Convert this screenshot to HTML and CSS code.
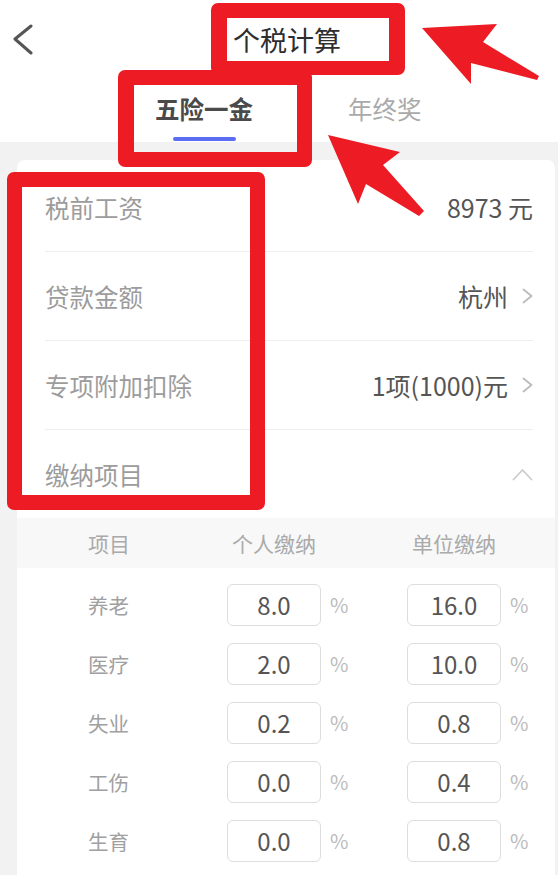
FILE: index.html
```html
<!DOCTYPE html>
<html lang="zh-CN">
<head>
<meta charset="utf-8">
<title>个税计算</title>
<link rel="stylesheet" href="styles.css">
</head>
<body>
<div class="page">
  <header class="nav">
    <svg class="back" width="22" height="32" viewBox="0 0 22 32"><polyline points="19,2 3,15 19,29" fill="none" stroke="#555" stroke-width="3" stroke-linecap="round" stroke-linejoin="round"/></svg>
    <h1 class="title">个税计算</h1>
  </header>
  <nav class="tabs">
    <div class="tab active"><span class="tab-text">五险一金</span><i class="bar"></i></div>
    <div class="tab"><span class="tab-text">年终奖</span></div>
  </nav>
  <main class="card">
    <div class="row"><span class="label">税前工资</span><span class="value">8973 元</span></div>
    <div class="row"><span class="label">贷款金额</span><span class="value">杭州<svg class="chev" width="11" height="16" viewBox="0 0 11 16"><polyline points="1.5,1.5 9.5,8 1.5,14.5" fill="none" stroke="#bbb" stroke-width="1.8" stroke-linecap="round" stroke-linejoin="round"/></svg></span></div>
    <div class="row"><span class="label">专项附加扣除</span><span class="value">1项(1000)元<svg class="chev" width="11" height="16" viewBox="0 0 11 16"><polyline points="1.5,1.5 9.5,8 1.5,14.5" fill="none" stroke="#bbb" stroke-width="1.8" stroke-linecap="round" stroke-linejoin="round"/></svg></span></div>
    <div class="row last"><span class="label">缴纳项目</span><svg class="caret" width="21" height="13" viewBox="0 0 21 13"><polyline points="1.5,11.5 10.5,2 19.5,11.5" fill="none" stroke="#ccc" stroke-width="1.8" stroke-linecap="round" stroke-linejoin="round"/></svg></div>
    <div class="thead">
      <span>项目</span><span class="c">个人缴纳</span><span></span><span class="c">单位缴纳</span><span></span>
    </div>
    <div class="tbody">
      <div class="trow"><span class="name">养老</span><input class="box" value="8.0" readonly><span class="pct">%</span><input class="box" value="16.0" readonly><span class="pct">%</span></div>
      <div class="trow"><span class="name">医疗</span><input class="box" value="2.0" readonly><span class="pct">%</span><input class="box" value="10.0" readonly><span class="pct">%</span></div>
      <div class="trow"><span class="name">失业</span><input class="box" value="0.2" readonly><span class="pct">%</span><input class="box" value="0.8" readonly><span class="pct">%</span></div>
      <div class="trow"><span class="name">工伤</span><input class="box" value="0.0" readonly><span class="pct">%</span><input class="box" value="0.4" readonly><span class="pct">%</span></div>
      <div class="trow"><span class="name">生育</span><input class="box" value="0.0" readonly><span class="pct">%</span><input class="box" value="0.8" readonly><span class="pct">%</span></div>
    </div>
  </main>

  <div class="mark mark-title"></div>
  <div class="mark mark-tab"></div>
  <div class="mark mark-list"></div>
  <svg class="arrows" width="558" height="875" viewBox="0 0 558 875">
    <polygon points="422,28 497,24 483,42 539,76 537,80 471,63 471,84" fill="#ed1c24"/>
    <polygon points="328,135 400,152 383,165 424,211 419,216 366,184 358,204" fill="#ed1c24"/>
  </svg>
</div>
</body>
</html>
```

FILE: styles.css
```css
* { box-sizing: border-box; }
html, body { margin: 0; padding: 0; }
body {
  width: 558px;
  height: 875px;
  overflow: hidden;
  background: #f2f2f2;
  font-family: "Noto Sans CJK SC", "Noto Sans", sans-serif;
}
.page {
  position: relative;
  width: 558px;
  height: 875px;
  overflow: hidden;
}
.nav {
  height: 80px;
  background: #fff;
  display: flex;
  align-items: center;
  padding-left: 12px;
}
.back { display: block; }
.title {
  margin: 0 0 0 199px;
  font-size: 27px;
  line-height: 32px;
  font-weight: 400;
  color: #2e2e2e;
}
.tabs {
  height: 62px;
  background: #fff;
  display: flex;
  gap: 95px;
  padding: 13px 0 0 155px;
}
.tab {
  display: flex;
  flex-direction: column;
  align-items: center;
}
.tab-text {
  font-size: 24.5px;
  line-height: 32px;
  color: #aaa;
}
.tab.active .tab-text {
  color: #4a4a4a;
  font-weight: 700;
}
.bar {
  display: block;
  width: 63px;
  height: 4px;
  margin-top: 12px;
  border-radius: 2px;
  background: #5b6df2;
}
.card {
  margin: 18px 0 0 17px;
  width: 538px;
  background: #fff;
  border-radius: 8px 8px 0 0;
  padding: 3px 0 20px;
}
.row {
  margin: 0 22px 0 28px;
  height: 89px;
  border-bottom: 1px solid #eee;
  display: flex;
  align-items: center;
  justify-content: space-between;
}
.row.last {
  height: 88px;
  border-bottom: none;
}
.label {
  font-size: 24.5px;
  color: #9c9c9c;
}
.value {
  display: flex;
  align-items: center;
  gap: 14px;
  font-size: 25px;
  color: #555;
}
.chev, .caret { display: block; }
.thead, .trow {
  display: grid;
  grid-template-columns: 139px 94px 86px 94px 1fr;
  align-items: center;
  padding-left: 71px;
}
.thead {
  height: 50px;
  background: #f8f8f8;
  font-size: 21px;
  color: #aaa;
}
.thead .c {
  text-align: center;
  white-space: nowrap;
}
.tbody { padding-top: 7px; }
.trow { height: 59px; }
.name {
  font-size: 20.5px;
  color: #a0a0a0;
}
.box {
  width: 94px;
  height: 42px;
  margin: 0;
  padding: 0;
  border: 1.5px solid #ddd;
  border-radius: 6px;
  background: #fff;
  text-align: center;
  font-family: "Noto Sans CJK SC", "Noto Sans", sans-serif;
  font-size: 24px;
  color: #555;
  outline: none;
}
.pct {
  padding-left: 9px;
  font-size: 20px;
  color: #bbb;
}
.mark {
  position: absolute;
  border: 15px solid #ed1c24;
  border-radius: 7px;
}
.mark-title { left: 211px; top: 3px; width: 194px; height: 72px; border-width: 15px 16px 14px 16px; }
.mark-tab { left: 118px; top: 70px; width: 194px; height: 97px; border-width: 15px 15px 15px 16px; }
.mark-list { left: 7px; top: 172px; width: 258px; height: 338px; }
.arrows {
  position: absolute;
  left: 0;
  top: 0;
  pointer-events: none;
}
```
